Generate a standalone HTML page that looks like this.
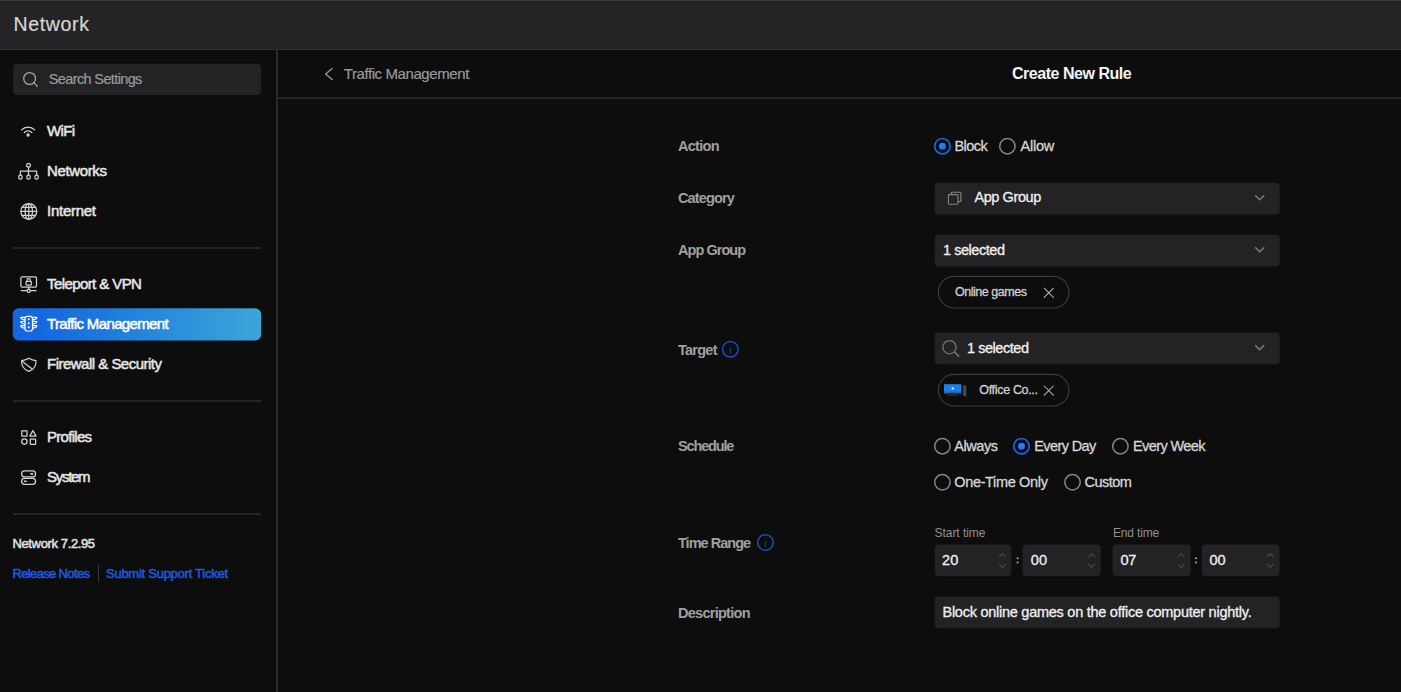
<!DOCTYPE html>
<html><head><meta charset="utf-8"><title>Network</title>
<style>
html,body{margin:0;padding:0}
body{width:1401px;height:692px;background:#0d0d0d;overflow:hidden;position:relative;font-family:"Liberation Sans",sans-serif}
.t{position:absolute;white-space:pre;line-height:1;display:block}
.b{position:absolute;box-sizing:border-box}
.box{position:absolute;background:#232325;border-radius:4px}
.hr{position:absolute;height:2px;background:#232325;left:13px;width:248px}
.chip{position:absolute;box-sizing:border-box;left:938px;width:131px;height:32px;border:1px solid #3b3b3d;border-radius:16px}
.r{position:absolute;box-sizing:border-box;width:17px;height:17px;border-radius:50%;border:1.3px solid #8e8e8e}
.r.on{border:1.6px solid #1a6ef2}
.r.on:after{content:"";position:absolute;left:50%;top:50%;width:6.6px;height:6.6px;margin:-3.3px 0 0 -3.3px;border-radius:50%;background:#1f7dff}
svg{position:absolute;left:0;top:0}
</style></head><body>
<!-- top bar -->
<div class="b" style="left:0;top:0;width:1401px;height:50px;background:#242426;border-top:1px solid #3b3b3d;border-bottom:1px solid #303032"></div>
<!-- sidebar border + content header line -->
<div class="b" style="left:276px;top:50px;width:2px;height:642px;background:#29292b"></div>
<div class="b" style="left:278px;top:97px;width:1123px;height:1px;background:#202022"></div>
<div class="b" style="left:278px;top:98px;width:1123px;height:1px;background:#2b2b2d"></div>
<!-- sidebar -->
<div class="hr" style="top:247px"></div>
<div class="hr" style="top:400px"></div>
<div class="hr" style="top:513px"></div>
<div class="b" style="left:98px;top:565px;width:1px;height:17px;background:#3a3a3c"></div>
<!-- form boxes -->
<!-- radios -->
<svg width="1401" height="692" viewBox="0 0 1401 692">
<defs><linearGradient id="pg" x1="0" y1="0" x2="1" y2="0">
<stop offset="0" stop-color="#1467e0"/><stop offset="0.12" stop-color="#1569e0"/><stop offset="0.35" stop-color="#1d78dd"/><stop offset="0.7" stop-color="#2e92da"/><stop offset="1" stop-color="#3ca5d8"/>
</linearGradient></defs>
<g fill="#232325">
<rect x="13.1" y="63.7" width="248" height="31.4" rx="4"/>
<rect x="934.7" y="182.7" width="345" height="31.8" rx="4"/>
<rect x="934.7" y="234.7" width="345" height="31.8" rx="4"/>
<rect x="934.7" y="332.6" width="345" height="31.7" rx="4"/>
<rect x="934.7" y="596.4" width="345" height="31.8" rx="4"/>
<rect x="934.8" y="544.6" width="76.5" height="31.6" rx="4"/>
<rect x="1022.6" y="544.6" width="78.2" height="31.6" rx="4"/>
<rect x="1112.6" y="544.6" width="78.2" height="31.6" rx="4"/>
<rect x="1201.8" y="544.6" width="77.7" height="31.6" rx="4"/>
</g>
<rect x="12.7" y="308.2" width="248.5" height="32.3" rx="6.2" fill="url(#pg)"/>
<g fill="none" stroke="#3c3c3e" stroke-width="1.15">
<rect x="938.4" y="276.3" width="130.5" height="31.7" rx="15.85"/>
<rect x="938.4" y="374.3" width="130.5" height="31.7" rx="15.85"/>
</g>
</svg>

<svg width="1401" height="692" viewBox="0 0 1401 692" fill="none" stroke-linecap="round" stroke-linejoin="round">
<!-- sidebar search -->
<g stroke="#a6a6a6" stroke-width="1.3">
<circle cx="29.6" cy="78.5" r="5.9"/><path d="M34 82.9 L37.3 86.2"/>
</g>
<!-- sidebar icons -->
<g stroke="#d2d2d2" stroke-width="1.25">
<!-- wifi -->
<path d="M21.5 129.9 A9.3 9.3 0 0 1 34.7 129.9"/>
<path d="M24.4 132.5 A5.2 5.2 0 0 1 31.8 132.5"/>
<circle cx="28.1" cy="135" r="1.1" fill="#d2d2d2"/>
<!-- networks -->
<circle cx="28.5" cy="165.3" r="1.9"/>
<path d="M28.5 167.3 V175 M20.4 175 V171.2 H36.6 V175"/>
<rect x="18.8" y="175.2" width="3.2" height="3.9" rx="1.4"/>
<rect x="26.9" y="175.2" width="3.2" height="3.9" rx="1.4"/>
<rect x="35" y="175.2" width="3.2" height="3.9" rx="1.4"/>
<!-- internet -->
<circle cx="28.8" cy="211.4" r="7.9"/>
<ellipse cx="28.8" cy="211.4" rx="3.7" ry="7.9"/>
<path d="M28.8 203.5 V219.3 M20.9 211.4 H36.7 M22.1 207.4 H35.5 M22.1 215.4 H35.5"/>
<!-- teleport -->
<rect x="20.9" y="276.8" width="15.6" height="10.4" rx="1.2"/>
<rect x="26.1" y="281.3" width="5.2" height="3.9" rx="0.8"/>
<path d="M27 281.3 V280.4 A1.7 1.7 0 0 1 30.4 280.4 V281.3"/>
<path d="M28.7 287.2 V289.2 M21.3 290.7 H26.9 M30.5 290.7 H36.1"/>
<circle cx="28.7" cy="290.7" r="1.6"/>
<!-- firewall -->
<path d="M21.6 360.6 Q25.4 360.5 28.8 358.3 Q32.3 360.5 36 360.6 Q36.6 368.3 28.8 371.4 Q21 368.3 21.6 360.6 Z"/>
<path d="M22.4 361.6 L31.6 368.6"/>
<!-- profiles -->
<rect x="21.8" y="430.9" width="5.2" height="5.2" rx="0.4"/>
<path d="M32.9 430.6 L36 436.1 H29.8 Z"/>
<circle cx="24.4" cy="441.6" r="2.7"/>
<rect x="30.3" y="439" width="5.3" height="5.3" rx="0.4"/>
<!-- system -->
<rect x="21.6" y="470.9" width="14" height="6" rx="3"/>
<rect x="21.6" y="478.3" width="14" height="6" rx="3"/>
<path d="M31 473.9 H32.6 M24.6 481.3 H26.2" stroke-width="1.6"/>
</g>
<!-- traffic (active, white) -->
<g stroke="#ffffff" stroke-width="1.2">
<rect x="25" y="316.4" width="7.5" height="14.6" rx="2.2"/>
<path d="M24.8 317.4 H20.7 Q21 319.6 24.8 319.9 M32.7 317.4 H36.8 Q36.5 319.6 32.7 319.9"/>
<path d="M24.8 321.5 H20.7 Q21 323.7 24.8 324.0 M32.7 321.5 H36.8 Q36.5 323.7 32.7 324.0"/>
<path d="M24.8 325.6 H20.7 Q21 327.8 24.8 328.1 M32.7 325.6 H36.8 Q36.5 327.8 32.7 328.1"/>
<path d="M28.75 319.2 v0.01 M28.75 323.2 v0.01 M28.75 327.2 v0.01" stroke-width="2"/>
</g>
<!-- back chevron -->
<path d="M332.2 68.6 L325.6 74.1 L332.2 79.6" stroke="#9a9a9a" stroke-width="1.3"/>
<!-- category icon -->
<g stroke="#858585" stroke-width="1.1">
<rect x="948.4" y="194.6" width="9.6" height="9.6" rx="0.6"/>
<path d="M951.3 194.4 V192.2 H960.9 V201.5 H958.3"/>
</g>
<!-- select chevrons -->
<g stroke="#7e7e80" stroke-width="1.4">
<path d="M1255.6 195.7 L1259.7 199.8 L1263.8 195.7"/>
<path d="M1255.6 247.7 L1259.7 251.8 L1263.8 247.7"/>
<path d="M1255.6 345.6 L1259.7 349.7 L1263.8 345.6"/>
</g>
<!-- target search icon -->
<g stroke="#747476" stroke-width="1.3">
<circle cx="949.5" cy="347.2" r="6.6"/><path d="M954.4 352 L958.6 356.2" stroke-width="1.7"/>
</g>
<!-- chip X -->
<g stroke="#b4b4b4" stroke-width="1.05">
<path d="M1044.2 288.2 L1053.4 297.4 M1053.4 288.2 L1044.2 297.4"/>
<path d="M1044.2 386 L1053.4 395.2 M1053.4 386 L1044.2 395.2"/>
</g>
<!-- monitor icon -->
<g stroke="none">
<rect x="944" y="384.2" width="17.3" height="9.2" fill="#1e80e6"/>
<rect x="944" y="391.6" width="17.3" height="1.8" fill="#1660b8"/>
<circle cx="952.7" cy="388.4" r="1.1" fill="#ffffff"/>
<rect x="949.5" y="393.4" width="6.5" height="1.2" fill="#26282c"/>
<rect x="946.8" y="394.6" width="11.8" height="1.3" fill="#2c2e32"/>
<rect x="963.2" y="385.2" width="3.2" height="11" rx="0.5" fill="#48494d"/>
</g>
<!-- info icons -->
<g stroke="#1750b8" stroke-width="1.5">
<circle cx="730.4" cy="349.3" r="7.8"/>
<circle cx="765.5" cy="542.5" r="7.8"/>
</g>
<g stroke="#14398a" stroke-width="1.3">
<path d="M730.4 348.4 V353.2 M730.4 345.4 v0.01"/>
<path d="M765.5 541.6 V546.4 M765.5 538.6 v0.01"/>
</g>
<!-- radios -->
<g stroke="#858585" stroke-width="1.5">
<circle cx="1007.4" cy="146.2" r="7.7"/>
<circle cx="942.4" cy="446.2" r="7.7"/>
<circle cx="1120.4" cy="446.2" r="7.7"/>
<circle cx="942.4" cy="482.3" r="7.7"/>
<circle cx="1072.5" cy="482.3" r="7.7"/>
</g>
<g stroke="#1767e6" stroke-width="1.7">
<circle cx="942.4" cy="146.2" r="7.7"/>
<circle cx="1021.5" cy="446.2" r="7.7"/>
</g>
<g fill="#1f7bff" stroke="none">
<circle cx="942.4" cy="146.2" r="3.4"/>
<circle cx="1021.5" cy="446.2" r="3.4"/>
</g>
<!-- spinners -->
<g stroke="#4a4a4c" stroke-width="1.15">
<path d="M999.5 556.9 L1002.6 553.7 L1005.7 556.9 M999.5 564.1 L1002.6 567.3 L1005.7 564.1"/>
<path d="M1088.5 556.9 L1091.6 553.7 L1094.7 556.9 M1088.5 564.1 L1091.6 567.3 L1094.7 564.1"/>
<path d="M1178.1 556.9 L1181.2 553.7 L1184.3 556.9 M1178.1 564.1 L1181.2 567.3 L1184.3 564.1"/>
<path d="M1267.1 556.9 L1270.2 553.7 L1273.3 556.9 M1267.1 564.1 L1270.2 567.3 L1273.3 564.1"/>
</g>
<g fill="#a4a4a4" stroke="none">
<circle cx="1017.6" cy="558.3" r="1.05"/><circle cx="1017.6" cy="562.5" r="1.05"/>
<circle cx="1196" cy="558.3" r="1.05"/><circle cx="1196" cy="562.5" r="1.05"/>
</g>
</svg>

<span class="t" style="left:13.60px;top:15.00px;font-size:19.5px;font-weight:400;color:#d6d6d6;letter-spacing:0.632px;-webkit-text-stroke:0.2px #d6d6d6">Network</span>
<span class="t" style="left:48.80px;top:72.00px;font-size:14.5px;font-weight:400;color:#9b9b9b;letter-spacing:-0.629px;-webkit-text-stroke:0.2px #9b9b9b">Search Settings</span>
<span class="t" style="left:47.00px;top:123.00px;font-size:15px;font-weight:400;color:#e6e6e6;letter-spacing:-0.667px;-webkit-text-stroke:0.5px #e6e6e6">WiFi</span>
<span class="t" style="left:47.00px;top:163.00px;font-size:15px;font-weight:400;color:#e6e6e6;letter-spacing:-0.368px;-webkit-text-stroke:0.5px #e6e6e6">Networks</span>
<span class="t" style="left:47.00px;top:203.00px;font-size:15px;font-weight:400;color:#e6e6e6;letter-spacing:-0.266px;-webkit-text-stroke:0.5px #e6e6e6">Internet</span>
<span class="t" style="left:47.00px;top:276.00px;font-size:15px;font-weight:400;color:#e6e6e6;letter-spacing:-0.589px;-webkit-text-stroke:0.5px #e6e6e6">Teleport &amp; VPN</span>
<span class="t" style="left:47.00px;top:316.00px;font-size:15px;font-weight:400;color:#ffffff;letter-spacing:-0.642px;-webkit-text-stroke:0.5px #ffffff">Traffic Management</span>
<span class="t" style="left:47.00px;top:356.00px;font-size:15px;font-weight:400;color:#e6e6e6;letter-spacing:-0.512px;-webkit-text-stroke:0.5px #e6e6e6">Firewall &amp; Security</span>
<span class="t" style="left:47.00px;top:429.00px;font-size:15px;font-weight:400;color:#e6e6e6;letter-spacing:-0.703px;-webkit-text-stroke:0.5px #e6e6e6">Profiles</span>
<span class="t" style="left:47.00px;top:469.00px;font-size:15px;font-weight:400;color:#e6e6e6;letter-spacing:-1.284px;-webkit-text-stroke:0.5px #e6e6e6">System</span>
<span class="t" style="left:12.50px;top:537.00px;font-size:13px;font-weight:400;color:#e0e0e0;letter-spacing:-0.373px;-webkit-text-stroke:0.5px #e0e0e0">Network 7.2.95</span>
<span class="t" style="left:12.50px;top:567.00px;font-size:13px;font-weight:400;color:#1a5ce0;letter-spacing:-0.651px;-webkit-text-stroke:0.5px #1a5ce0">Release Notes</span>
<span class="t" style="left:106.00px;top:567.00px;font-size:13px;font-weight:400;color:#1a5ce0;letter-spacing:-0.258px;-webkit-text-stroke:0.5px #1a5ce0">Submit Support Ticket</span>
<span class="t" style="left:343.70px;top:66.00px;font-size:15px;font-weight:400;color:#9a9a9a;letter-spacing:-0.409px;-webkit-text-stroke:0.2px #9a9a9a">Traffic Management</span>
<span class="t" style="left:1012.00px;top:66.00px;font-size:16px;font-weight:700;color:#f4f4f4;letter-spacing:-0.468px">Create New Rule</span>
<span class="t" style="left:678.00px;top:139.00px;font-size:14.5px;font-weight:700;color:#a0a0a0;letter-spacing:-0.717px">Action</span>
<span class="t" style="left:678.00px;top:191.00px;font-size:14.5px;font-weight:700;color:#a0a0a0;letter-spacing:-0.855px">Category</span>
<span class="t" style="left:678.00px;top:243.00px;font-size:14.5px;font-weight:700;color:#a0a0a0;letter-spacing:-0.959px">App Group</span>
<span class="t" style="left:678.00px;top:343.00px;font-size:14.5px;font-weight:700;color:#a0a0a0;letter-spacing:-0.755px">Target</span>
<span class="t" style="left:678.00px;top:439.00px;font-size:14.5px;font-weight:700;color:#a0a0a0;letter-spacing:-1.153px">Schedule</span>
<span class="t" style="left:678.00px;top:536.00px;font-size:14.5px;font-weight:700;color:#a0a0a0;letter-spacing:-0.974px">Time Range</span>
<span class="t" style="left:678.00px;top:606.00px;font-size:14.5px;font-weight:700;color:#a0a0a0;letter-spacing:-0.725px">Description</span>
<span class="t" style="left:954.50px;top:139.00px;font-size:14.5px;font-weight:400;color:#d6d6d6;letter-spacing:-0.574px;-webkit-text-stroke:0.3px #d6d6d6">Block</span>
<span class="t" style="left:1020.50px;top:139.00px;font-size:14.5px;font-weight:400;color:#d6d6d6;letter-spacing:-0.223px;-webkit-text-stroke:0.3px #d6d6d6">Allow</span>
<span class="t" style="left:974.40px;top:190.00px;font-size:14.5px;font-weight:400;color:#f0f0f0;letter-spacing:-0.404px;-webkit-text-stroke:0.3px #f0f0f0">App Group</span>
<span class="t" style="left:943.00px;top:243.00px;font-size:14.5px;font-weight:400;color:#f0f0f0;letter-spacing:-0.462px;-webkit-text-stroke:0.3px #f0f0f0">1 selected</span>
<span class="t" style="left:955.00px;top:286.00px;font-size:12.5px;font-weight:400;color:#cfcfcf;letter-spacing:-0.468px;-webkit-text-stroke:0.3px #cfcfcf">Online games</span>
<span class="t" style="left:967.00px;top:341.00px;font-size:14.5px;font-weight:400;color:#f0f0f0;letter-spacing:-0.462px;-webkit-text-stroke:0.3px #f0f0f0">1 selected</span>
<span class="t" style="left:979.30px;top:384.00px;font-size:12.5px;font-weight:400;color:#cfcfcf;letter-spacing:-0.328px;-webkit-text-stroke:0.3px #cfcfcf">Office Co...</span>
<span class="t" style="left:954.25px;top:439.00px;font-size:14.5px;font-weight:400;color:#d6d6d6;letter-spacing:-0.448px;-webkit-text-stroke:0.3px #d6d6d6">Always</span>
<span class="t" style="left:1034.25px;top:439.00px;font-size:14.5px;font-weight:400;color:#d6d6d6;letter-spacing:-0.604px;-webkit-text-stroke:0.3px #d6d6d6">Every Day</span>
<span class="t" style="left:1133.00px;top:439.00px;font-size:14.5px;font-weight:400;color:#d6d6d6;letter-spacing:-0.602px;-webkit-text-stroke:0.3px #d6d6d6">Every Week</span>
<span class="t" style="left:954.25px;top:475.00px;font-size:14.5px;font-weight:400;color:#d6d6d6;letter-spacing:-0.344px;-webkit-text-stroke:0.3px #d6d6d6">One-Time Only</span>
<span class="t" style="left:1084.50px;top:475.00px;font-size:14.5px;font-weight:400;color:#d6d6d6;letter-spacing:-0.514px;-webkit-text-stroke:0.3px #d6d6d6">Custom</span>
<span class="t" style="left:934.50px;top:527.00px;font-size:12px;font-weight:400;color:#909090;letter-spacing:-0.042px">Start time</span>
<span class="t" style="left:1113.00px;top:527.00px;font-size:12px;font-weight:400;color:#909090;letter-spacing:-0.170px">End time</span>
<span class="t" style="left:942.00px;top:553.00px;font-size:14.5px;font-weight:400;color:#f0f0f0;letter-spacing:0.164px;-webkit-text-stroke:0.3px #f0f0f0">20</span>
<span class="t" style="left:1030.75px;top:553.00px;font-size:14.5px;font-weight:400;color:#f0f0f0;letter-spacing:0.164px;-webkit-text-stroke:0.3px #f0f0f0">00</span>
<span class="t" style="left:1120.50px;top:553.00px;font-size:14.5px;font-weight:400;color:#f0f0f0;letter-spacing:-0.336px;-webkit-text-stroke:0.3px #f0f0f0">07</span>
<span class="t" style="left:1209.50px;top:553.00px;font-size:14.5px;font-weight:400;color:#f0f0f0;letter-spacing:-0.086px;-webkit-text-stroke:0.3px #f0f0f0">00</span>
<span class="t" style="left:942.50px;top:605.00px;font-size:14.5px;font-weight:400;color:#f0f0f0;letter-spacing:-0.259px;-webkit-text-stroke:0.3px #f0f0f0">Block online games on the office computer nightly.</span>
</body></html>
